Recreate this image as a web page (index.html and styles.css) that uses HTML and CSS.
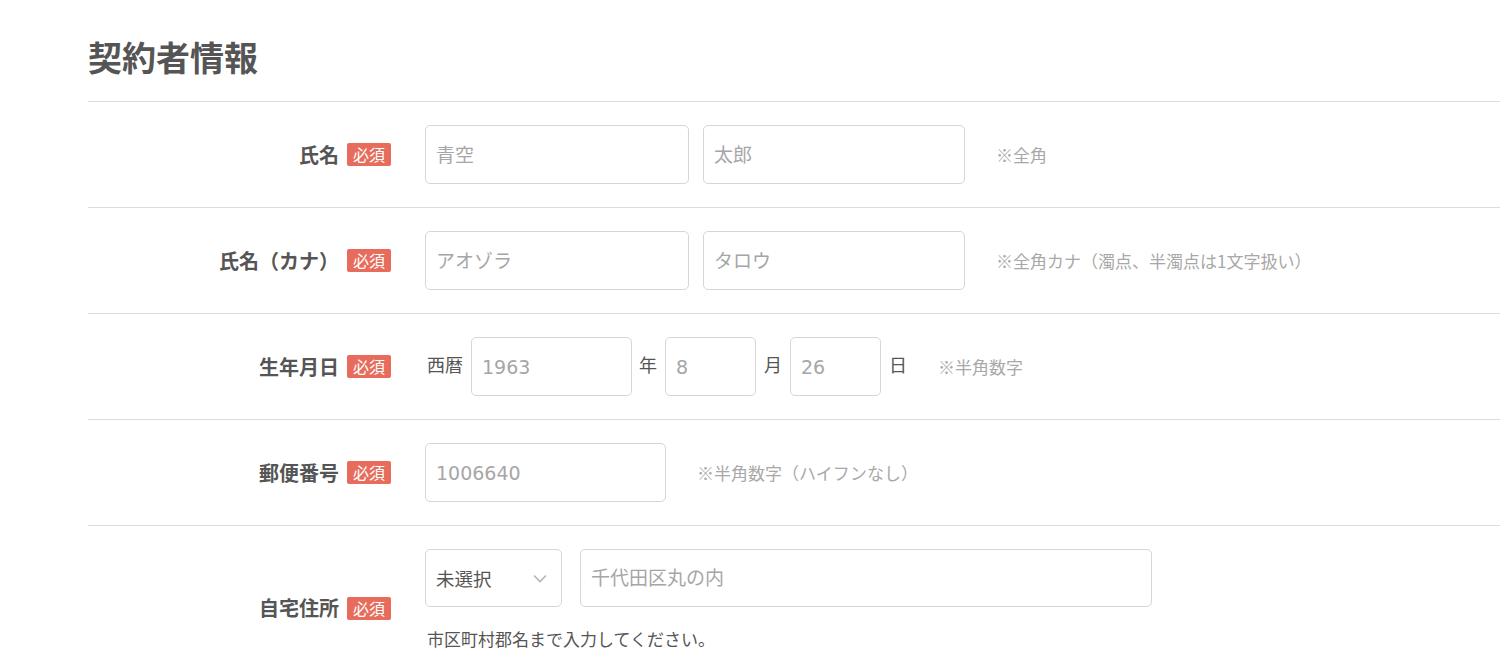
FILE: index.html
```html
<!DOCTYPE html>
<html lang="ja">
<head>
<meta charset="utf-8">
<title>契約者情報</title>
<link rel="stylesheet" href="styles.css">
</head>
<body>
<main class="page">
  <h1 class="title">契約者情報</h1>
  <div class="form">
    <div class="row">
      <div class="label"><span class="label-text">氏名</span><span class="badge">必須</span></div>
      <div class="fields">
        <div class="line">
          <input class="input w-name" type="text" placeholder="青空">
          <input class="input w-name2" type="text" placeholder="太郎">
          <span class="note note-name">※全角</span>
        </div>
      </div>
    </div>
    <div class="row">
      <div class="label"><span class="label-text">氏名（カナ）</span><span class="badge">必須</span></div>
      <div class="fields">
        <div class="line">
          <input class="input w-name" type="text" placeholder="アオゾラ">
          <input class="input w-name2" type="text" placeholder="タロウ">
          <span class="note note-name">※全角カナ（濁点、半濁点は1文字扱い）</span>
        </div>
      </div>
    </div>
    <div class="row">
      <div class="label"><span class="label-text">生年月日</span><span class="badge">必須</span></div>
      <div class="fields">
        <div class="line line-date">
          <span class="unit unit-first">西暦</span>
          <input class="input w-year" type="text" placeholder="1963">
          <span class="unit">年</span>
          <input class="input w-md" type="text" placeholder="8">
          <span class="unit">月</span>
          <input class="input w-md" type="text" placeholder="26">
          <span class="unit">日</span>
          <span class="note note-date">※半角数字</span>
        </div>
      </div>
    </div>
    <div class="row">
      <div class="label"><span class="label-text">郵便番号</span><span class="badge">必須</span></div>
      <div class="fields">
        <div class="line">
          <input class="input w-zip" type="text" placeholder="1006640">
          <span class="note note-zip">※半角数字（ハイフンなし）</span>
        </div>
      </div>
    </div>
    <div class="row row-last">
      <div class="label"><span class="label-text">自宅住所</span><span class="badge">必須</span></div>
      <div class="fields fields-last">
        <div class="line line-addr">
          <div class="select">
            <span class="select-text">未選択</span>
            <svg class="chev" width="14" height="9" viewBox="0 0 14 9"><path d="M1 1.5 L7 7.5 L13 1.5" fill="none" stroke="#b5b5b5" stroke-width="1.6"/></svg>
          </div>
          <input class="input w-city" type="text" placeholder="千代田区丸の内">
        </div>
        <p class="helper">市区町村郡名まで入力してください。</p>
      </div>
    </div>
  </div>
</main>
</body>
</html>
```

FILE: styles.css
```css
* { box-sizing: border-box; }
html, body { margin: 0; padding: 0; background: #fff; }
body {
  font-family: "Noto Sans CJK JP", "Noto Sans", sans-serif;
  color: #555;
  height: 667px;
  overflow: hidden;
}
.page {
  padding-left: 88px;
}
.title {
  margin: 0;
  padding-top: 33px;
  height: 101px;
  font-size: 34px;
  line-height: 48px;
  font-weight: 700;
  color: #555;
  letter-spacing: 0;
}
.form {
  border-top: 1px solid #dcdcdc;
}
.row {
  display: flex;
  align-items: center;
  border-bottom: 1px solid #dcdcdc;
  padding: 23px 0;
  min-height: 106px;
}
.label {
  width: 303px;
  flex: none;
  display: flex;
  justify-content: flex-end;
  align-items: center;
  gap: 8px;
}
.label-text {
  font-size: 20px;
  font-weight: 700;
  color: #555;
  line-height: 24px;
}
.badge {
  display: inline-block;
  background: #e76c5c;
  color: #fff;
  font-size: 16px;
  line-height: 23px;
  height: 23px;
  padding: 0 6px;
  border-radius: 2px;
}
.fields {
  margin-left: 34px;
}
.fields-last { padding-bottom: 16px; }
.line {
  display: flex;
  align-items: center;
}
.input {
  height: 59px;
  border: 1px solid #d6d6d6;
  border-radius: 5px;
  background: #fff;
  padding: 0 10px;
  font-family: "DejaVu Sans", "Noto Sans CJK JP", sans-serif;
  font-size: 19px;
  color: #555;
  outline: none;
}
.input::placeholder { color: #a6a6a6; }
.w-name { width: 264px; margin-right: 14px; }
.w-name2 { width: 262px; }
.note {
  font-size: 17px;
  color: #a8a8a8;
  white-space: nowrap;
}
.note-name { margin-left: 31px; }
.line-date .unit {
  font-size: 18px;
  color: #555;
  align-self: flex-start;
  margin-top: 14px;
}
.line-date .unit-first { margin-left: 2px; margin-right: 8px; }
.w-year { width: 161px; margin-right: 7px; }
.w-md { width: 91px; margin: 0 8px; }
.note-date { margin-left: 31px; }
.w-zip { width: 241px; }
.note-zip { margin-left: 31px; }
.line-addr { gap: 18px; }
.select {
  width: 137px;
  height: 58px;
  border: 1px solid #d6d6d6;
  border-radius: 5px;
  display: flex;
  align-items: center;
  justify-content: space-between;
  padding: 0 14px 0 10px;
}
.select-text {
  font-size: 18.5px;
  color: #555;
}
.chev { display: block; }
.w-city { width: 572px; height: 58px; }
.helper {
  margin: 20px 0 0 2px;
  font-size: 17px;
  line-height: 24px;
  color: #555;
}
```
